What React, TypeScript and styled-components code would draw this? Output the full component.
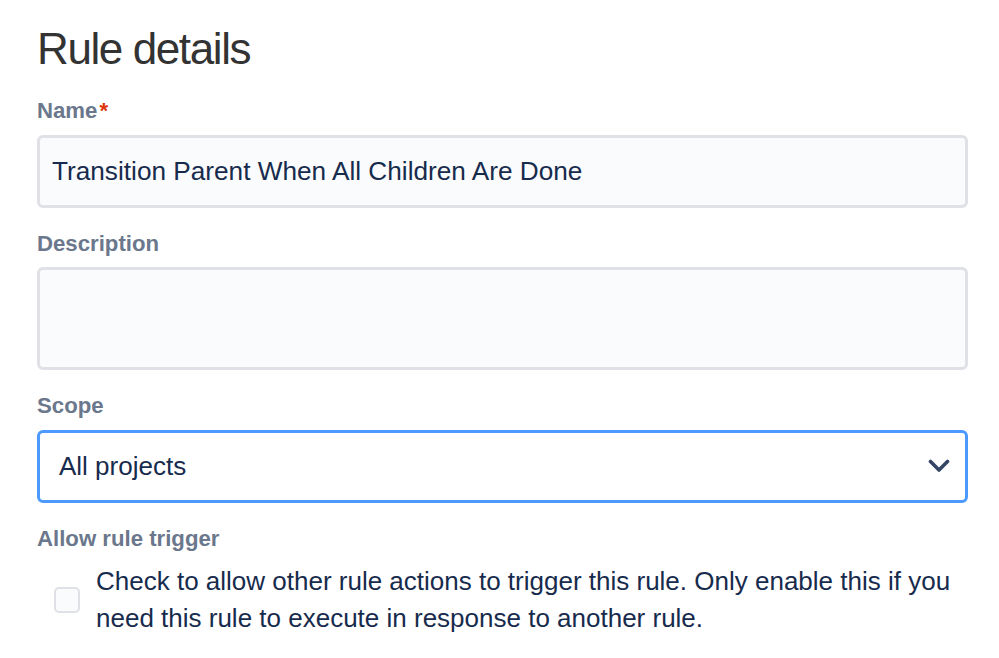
import styled, { createGlobalStyle } from "styled-components";

const GlobalStyle = createGlobalStyle`
  body {
    margin: 0;
    background: #ffffff;
    font-family: "Liberation Sans", Arial, sans-serif;
  }
  * {
    box-sizing: border-box;
  }
`;

const Page = styled.div`
  padding: 21px 31px 0 37px;
`;

const Heading = styled.h1`
  margin: 0;
  font-size: 44px;
  line-height: 56px;
  font-weight: 400;
  letter-spacing: -1.4px;
  color: #333333;
`;

const Field = styled.div<{ $first?: boolean }>`
  display: flex;
  flex-direction: column;
  margin-top: ${({ $first }) => ($first ? "22px" : "24px")};
`;

const Label = styled.label`
  display: block;
  font-size: 22.2px;
  line-height: 24px;
  font-weight: 700;
  color: #6b778c;
  margin-bottom: 11.5px;
`;

const Required = styled.span`
  color: #de350b;
  margin-left: 2px;
`;

const TextInput = styled.input`
  width: 100%;
  height: 73px;
  padding: 0 12px;
  border: 3px solid #dfe1e6;
  border-radius: 6px;
  background: #fafbfc;
  color: #172b4d;
  font-family: "Liberation Sans", Arial, sans-serif;
  font-size: 26.2px;
  outline: none;
`;

const TextArea = styled.textarea`
  display: block;
  width: 100%;
  height: 103px;
  padding: 12px;
  border: 3px solid #dfe1e6;
  border-radius: 6px;
  background: #fafbfc;
  resize: none;
  outline: none;
`;

const Select = styled.div`
  display: flex;
  align-items: center;
  justify-content: space-between;
  height: 73px;
  padding: 0 15px 0 19px;
  border: 3px solid #4c9aff;
  border-radius: 6px;
  background: #ffffff;
  color: #172b4d;
  font-size: 26px;
`;

const CheckRow = styled.div`
  display: flex;
  align-items: center;
  gap: 16px;
  padding-left: 17px;
  margin-top: 0.5px;
`;

const Checkbox = styled.span`
  flex: none;
  width: 26px;
  height: 26px;
  border: 2.5px solid #dfe1e6;
  border-radius: 5px;
  background: #fafbfc;
`;

const CheckText = styled.div`
  font-size: 26px;
  line-height: 37px;
  color: #172b4d;
`;

function Chevron() {
  return (
    <svg width="22" height="14" viewBox="0 0 22 14">
      <polyline
        points="2.5,2.5 11,11 19.5,2.5"
        fill="none"
        stroke="#344563"
        strokeWidth="3.6"
        strokeLinecap="round"
        strokeLinejoin="round"
      />
    </svg>
  );
}

export default function App() {
  return (
    <>
      <GlobalStyle />
      <Page>
        <Heading>Rule details</Heading>
        <Field $first>
          <Label>
            Name<Required>*</Required>
          </Label>
          <TextInput readOnly value="Transition Parent When All Children Are Done" />
        </Field>
        <Field>
          <Label>Description</Label>
          <TextArea readOnly value="" />
        </Field>
        <Field>
          <Label>Scope</Label>
          <Select>
            <span>All projects</span>
            <Chevron />
          </Select>
        </Field>
        <Field>
          <Label>Allow rule trigger</Label>
          <CheckRow>
            <Checkbox />
            <CheckText>
              Check to allow other rule actions to trigger this rule. Only enable this if you
              need this rule to execute in response to another rule.
            </CheckText>
          </CheckRow>
        </Field>
      </Page>
    </>
  );
}
